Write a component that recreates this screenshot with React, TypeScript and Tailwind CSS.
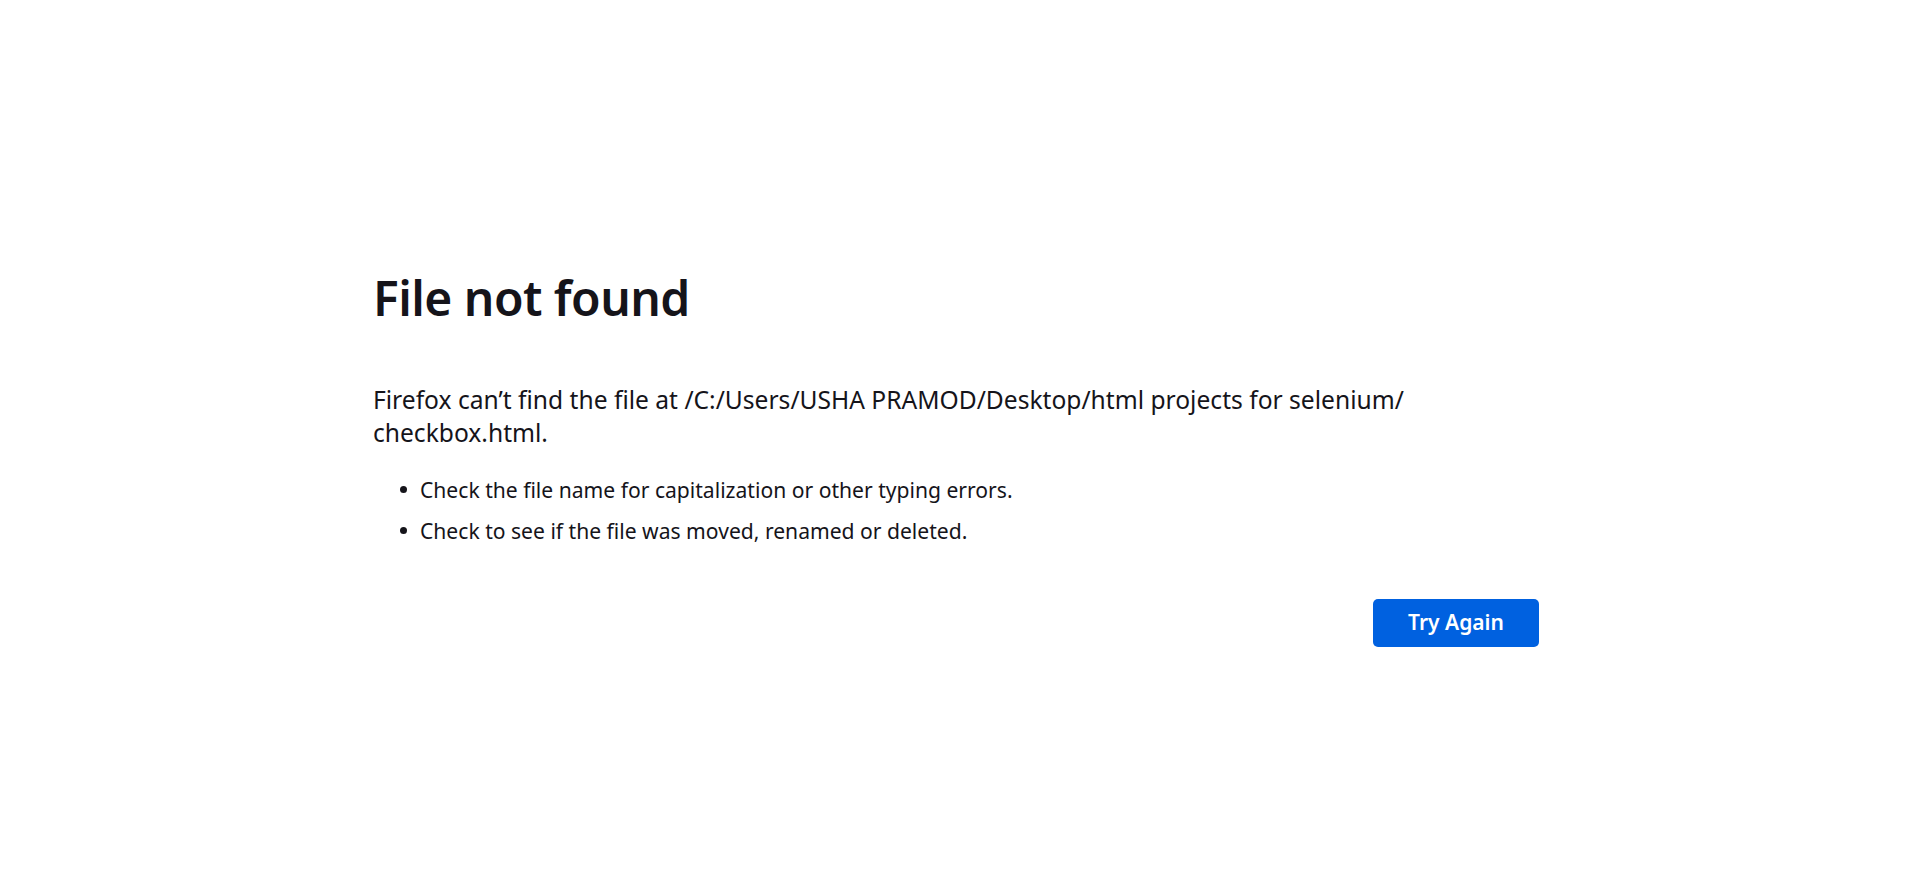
import React from "react";

export default function App() {
  const font = { fontFamily: '"Noto Sans", "Open Sans", sans-serif' };
  return (
    <div className="w-[1920px] h-[880px] bg-white text-[#15141a] overflow-hidden" style={font}>
      <div className="flex flex-col ml-[373px] w-[1166px] pt-[268px]">
        <h1 className="text-[48px] leading-[60px] font-semibold m-0 tracking-[-0.55px]">File not found</h1>
        <p className="mt-[55px] text-[24.6px] leading-[33px] m-0">
          Firefox can’t find the file at /C:/Users/USHA PRAMOD/Desktop/html projects for selenium/<wbr />checkbox.html.
        </p>
        <ul className="mt-[26px] flex flex-col gap-[12px] pl-[27px]">
          <li className="flex items-center gap-[13px] text-[21.1px] leading-[29px]">
            <span className="w-[7px] h-[7px] rounded-full bg-[#15141a] shrink-0" />
            <span>Check the file name for capitalization or other typing errors.</span>
          </li>
          <li className="flex items-center gap-[13px] text-[21.1px] leading-[29px]">
            <span className="w-[7px] h-[7px] rounded-full bg-[#15141a] shrink-0" />
            <span>Check to see if the file was moved, renamed or deleted.</span>
          </li>
        </ul>
        <div className="flex justify-end mt-[54px]">
          <button className="w-[166px] h-[48px] rounded-[5px] bg-[#0061e0] text-white text-[21px] font-semibold">
            Try Again
          </button>
        </div>
      </div>
    </div>
  );
}
